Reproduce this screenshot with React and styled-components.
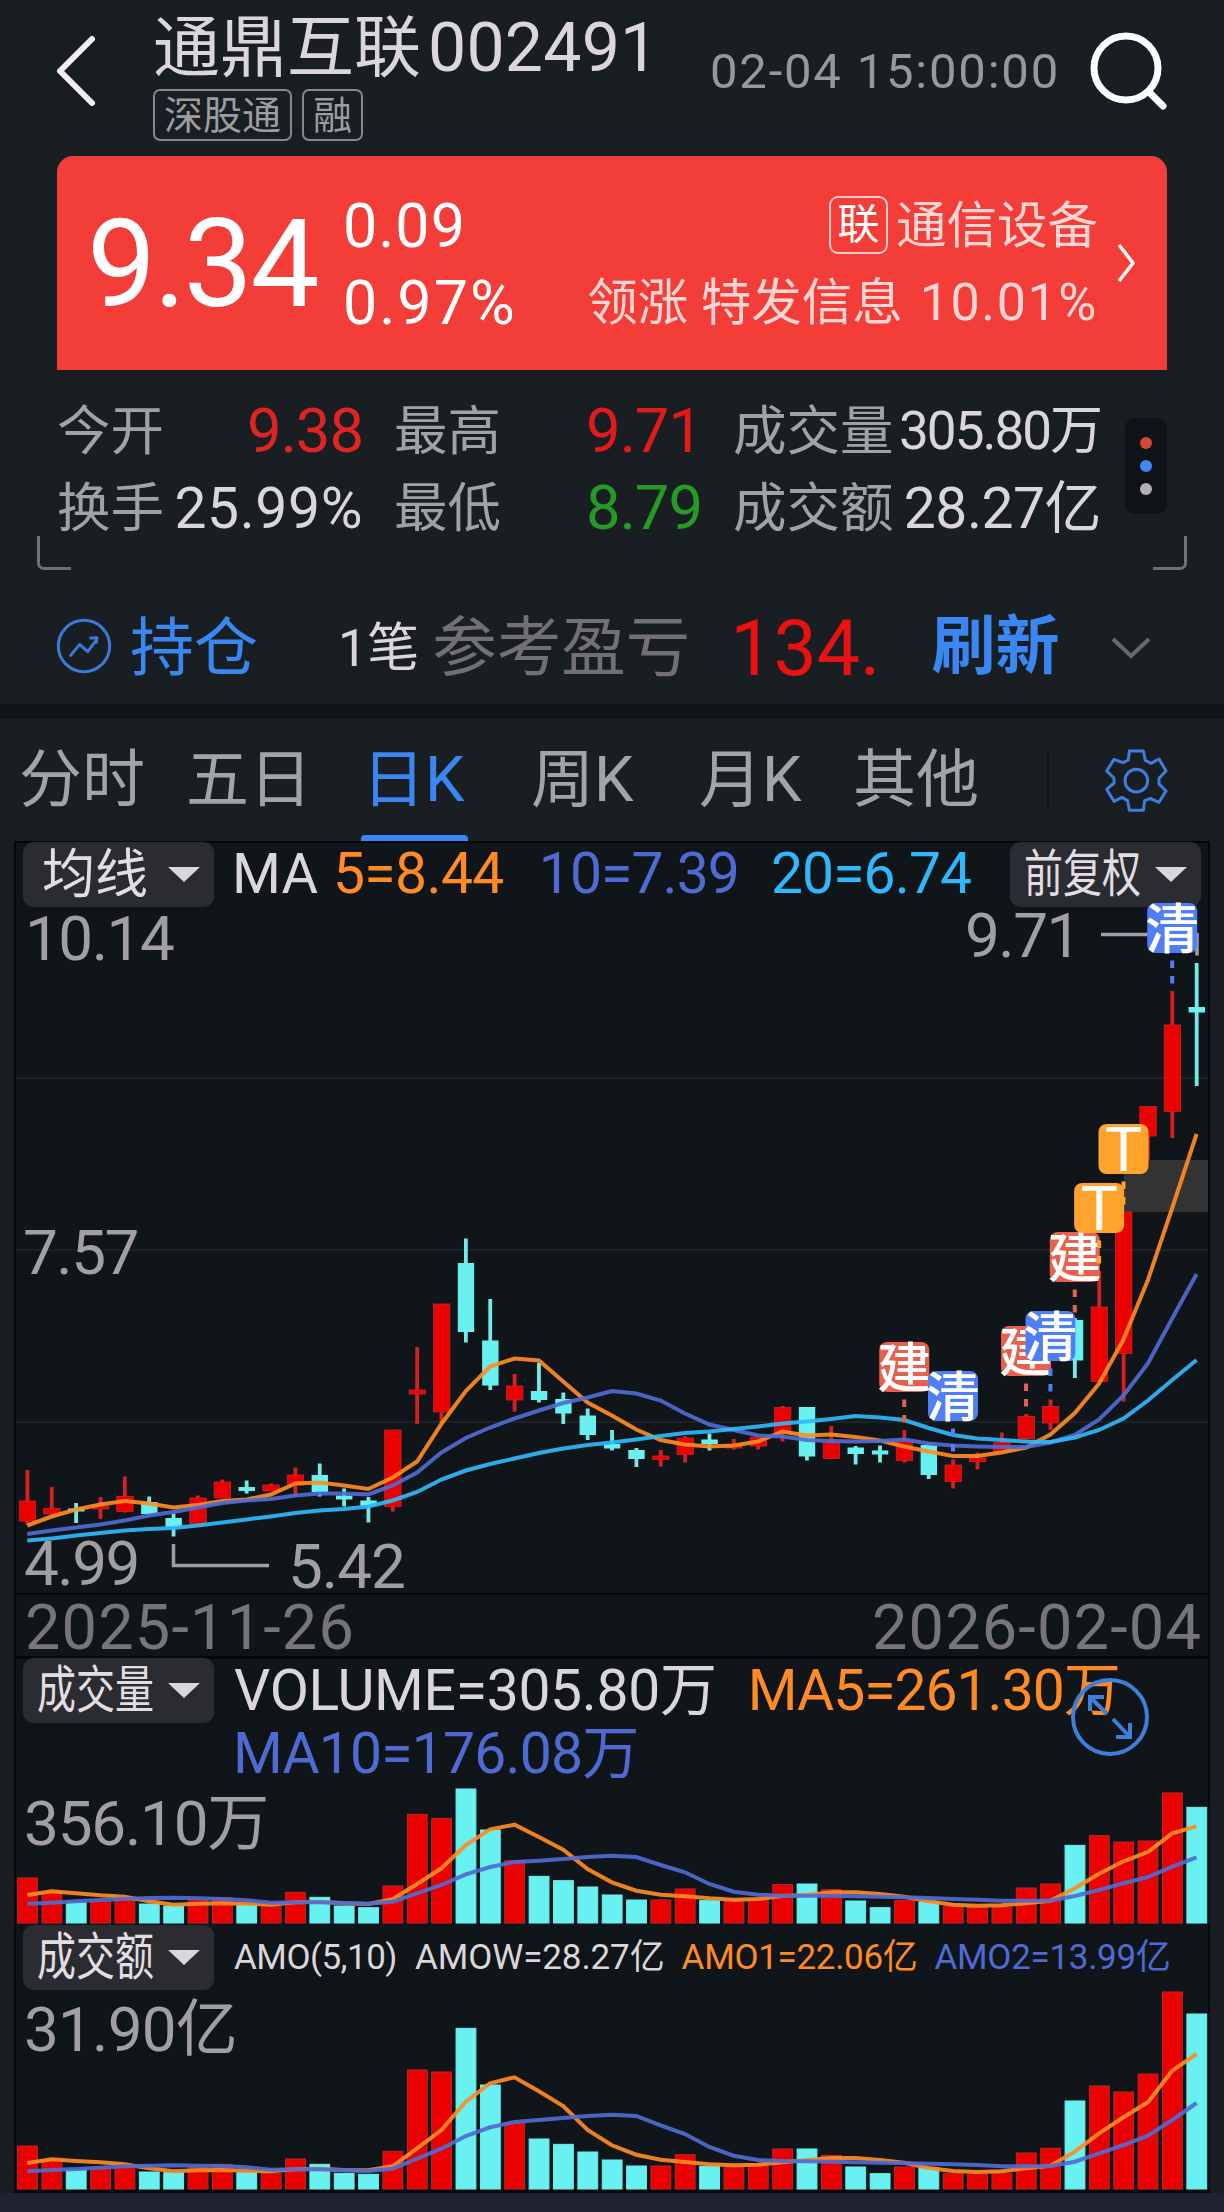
import React from 'react'
import styled, { createGlobalStyle } from 'styled-components'

const RED = '#eb0000'
const CYAN = '#68f1f0'
const ORANGE = '#ff8b22'
const INDIGO = '#4f6bd3'
const SKY = '#2fb9fb'
const BLUE = '#3a86f2'
const FONT = "Roboto, 'Noto Sans CJK SC', sans-serif"

const GlobalStyle = createGlobalStyle`
  body {
    margin: 0;
    background: #191e22;
    font-family: ${FONT};
  }
  * {
    box-sizing: border-box;
  }
`

const Page = styled.div`
  width: 1224px;
  height: 2212px;
  display: flex;
  flex-direction: column;
  overflow: hidden;
  background: #191e22;
`

// text with its own size, spacing and left offset
const Txt = styled.span`
  display: block;
  white-space: pre;
  line-height: 1;
  font-size: ${(p) => p.$size}px;
  letter-spacing: ${(p) => p.$ls || 0}px;
  color: ${(p) => p.$color || '#dad6da'};
  font-weight: ${(p) => p.$weight || 400};
  margin-left: ${(p) => p.$ml || 0}px;
  margin-top: ${(p) => p.$mt || 0}px;
`

const Header = styled.header`
  height: 156px;
  flex: none;
  display: flex;
  align-items: flex-start;
  padding-left: 54px;
`

const BackIcon = styled.svg`
  width: 44px;
  height: 76px;
  margin-top: 33px;
`

const TitleBlock = styled.div`
  width: 557px;
  padding: 12px 0 0 55px;
`

const Title = styled.h1`
  display: flex;
  align-items: center;
  height: 70px;
  margin: 0;
  font-weight: 400;
`

const Tags = styled.div`
  display: flex;
  gap: 10px;
  margin-top: 7px;
`

const Tag = styled.span`
  height: 52px;
  padding: 0 9px;
  border: 2px solid #85888d;
  border-radius: 7px;
  color: #9b9da1;
  font-size: 39px;
  line-height: 50px;
`

const Time = styled.div`
  width: 378px;
  padding-top: 47px;
`

const SearchIcon = styled.svg`
  width: 84px;
  height: 84px;
  margin-top: 30px;
  margin-left: 55px;
`

const HeaderRight = styled.div`
  display: flex;
  width: 520px;
`

const Card = styled.section`
  height: 214px;
  flex: none;
  margin: 0 57px;
  padding: 0 28px 0 30px;
  display: flex;
  background: #f23d39;
  border-radius: 16px 16px 0 0;
`

const Price = styled.div`
  width: 256px;
  padding-top: 47px;
`

const Change = styled.div`
  width: 209px;
  display: flex;
  flex-direction: column;
  gap: 16px;
  padding-top: 40px;
`

const Sector = styled.div`
  width: 546px;
  display: flex;
  flex-direction: column;
`

const SectorRow = styled.div`
  display: flex;
  justify-content: flex-end;
  align-items: center;
  height: 60px;
  margin-top: ${(p) => p.$mt}px;
`

const LinkTag = styled.span`
  width: 59px;
  height: 58px;
  margin-right: 8px;
  border: 2px solid #fbc9c7;
  border-radius: 9px;
  color: #fff;
  font-size: 42px;
  line-height: 53px;
  text-align: center;
`

const CardArrow = styled.svg`
  width: 24px;
  height: 44px;
  margin: 85px 0 0 17px;
`

const Stats = styled.section`
  height: 213px;
  flex: none;
  display: flex;
  padding: 0 37px;
`

const Corner = styled.div`
  width: 34px;
  height: 34px;
  flex: none;
  margin-top: 166px;
  border: 3px solid #6f7175;
  border-top: 0;
  ${(p) => (p.$right ? 'border-left: 0; border-bottom-right-radius: 7px;' : 'border-right: 0; border-bottom-left-radius: 7px;')}
`

const StatGrid = styled.div`
  display: grid;
  grid-template-columns: 306px 308px 368px;
  grid-auto-rows: 77px;
  column-gap: 31px;
  width: 1044px;
  flex: none;
  margin: 23px 0 0 -14px;
`

const Stat = styled.div`
  display: flex;
  justify-content: space-between;
  align-items: center;
`

const Dots = styled.div`
  width: 42px;
  height: 96px;
  flex: none;
  margin: 48px 0 0 24px;
  padding: 19px 0 0;
  display: flex;
  flex-direction: column;
  align-items: center;
  gap: 11px;
  background: #0f1316;
  border-radius: 10px;
`

const Dot = styled.i`
  width: 12px;
  height: 12px;
  border-radius: 50%;
  background: ${(p) => p.$color};
`

const StatsRight = styled.div`
  display: flex;
  flex: 1;
  min-width: 0;
`

const Holding = styled.section`
  height: 121px;
  flex: none;
  padding: 4px 0 0 54px;
  display: flex;
  align-items: center;
`

const TrendIcon = styled.svg`
  width: 60px;
  height: 60px;
`

const DownIcon = styled.svg`
  width: 44px;
  height: 26px;
  margin-left: 50px;
  margin-top: 4px;
`

const Band = styled.div`
  height: 15px;
  flex: none;
  background: #111519;
`

const Tabs = styled.nav`
  height: 122px;
  flex: none;
  display: flex;
  padding-left: 19px;
`

const Tab = styled.div`
  width: ${(p) => p.$w}px;
  display: flex;
  flex-direction: column;
  justify-content: space-between;
  color: ${(p) => (p.$active ? BLUE : '#a3a4a9')};
  font-size: 63px;
  line-height: 122px;
  white-space: nowrap;
`

const Underline = styled.div`
  height: 6px;
  width: 107px;
  flex: none;
  margin: -6px 0 0 -1px;
  background: ${BLUE};
  border-radius: 4px 4px 0 0;
`

const TabDivider = styled.div`
  width: 2px;
  height: 57px;
  margin-top: 32px;
  background: #12161a;
`

const GearIcon = styled.svg`
  width: 92px;
  height: 92px;
  margin: 16px 0 0 41px;
`

const Panel = styled.section`
  height: 1352px;
  flex: none;
  margin: 0 14px;
  border: 2px solid #050709;
  border-width: 2px 2px 3px;
  background: #101519;
  display: flex;
  flex-direction: column;
`

const Legend = styled.div`
  height: 65px;
  flex: none;
  display: flex;
  align-items: center;
  padding-left: 7px;
  margin-top: ${(p) => p.$mt || 0}px;
`

const Select = styled.button`
  width: 191px;
  height: 65px;
  flex: none;
  display: flex;
  align-items: center;
  justify-content: space-between;
  margin: ${(p) => (p.$end ? '-2px 7px 0 auto' : '-2px 0 0')};
  padding: 0 14px 0 ${(p) => p.$pl || 14}px;
  border: 0;
  border-radius: 11px;
  background: #2a2c31;
  color: #e2dde1;
  font: 400 53px/62px ${FONT};
`

const Narrow = styled.span`
  width: 118px;
  white-space: nowrap;
  font-size: 51px;
  line-height: 60px;
  transform: scaleX(0.765);
  transform-origin: left;
`

const Triangle = styled.i`
  flex: none;
  border: 16px solid transparent;
  border-top: 15px solid #dad6da;
  border-bottom: 0;
`

const Wrapped = styled.div`
  display: flex;
  height: 64px;
  padding: 0 0 5px 217px;
  align-items: center;
`

const Dates = styled.div`
  height: 66px;
  flex: none;
  display: flex;
  justify-content: space-between;
  align-items: center;
  padding: 3px 6px 0 9px;
  border: solid #050709;
  border-width: 2px 0 3px;
`

const Chart = styled.svg`
  display: block;
  flex: none;
  width: 1192px;
  height: ${(p) => p.$h}px;
  overflow: visible;
  position: relative;
`

const ExpandIcon = styled.svg`
  width: 80px;
  height: 80px;
  flex: none;
  margin-left: -50px;
  margin-top: 50px;
  position: relative;
`

const TabBar = styled.div`
  flex: 1;
  background: #1f2331;
`

// ---- chart data: everything on a 49 day axis ----

const STEP = 24.36
const x = (i) => 27.3 + STEP * i

// [direction, high, body top, body bottom, low]
const candles = [
  ['r', 1470, 1501, 1521, 1525], ['r', 1487, 1508.5, 1514, 1514.5], ['c', 1503, 1508.5, 1511.5, 1523],
  ['r', 1497, 1506, 1509, 1519], ['r', 1476.5, 1496.5, 1511.5, 1512.5], ['c', 1496.5, 1502, 1514, 1514],
  ['c', 1513.5, 1518, 1527, 1536.5], ['r', 1495.5, 1498, 1523.5, 1524], ['r', 1479.5, 1482, 1498, 1498],
  ['c', 1480.5, 1487, 1491, 1493.5], ['r', 1483.5, 1485, 1491, 1491], ['r', 1467.5, 1475, 1485, 1496.5],
  ['c', 1463.5, 1475, 1492, 1496.5], ['c', 1488.5, 1495.5, 1499.5, 1506.5], ['c', 1497, 1500.5, 1506, 1522.5],
  ['r', 1430, 1430, 1506.5, 1511.5], ['r', 1347, 1390, 1394, 1424], ['r', 1304, 1304, 1412, 1423],
  ['c', 1238.5, 1263, 1332, 1342.5], ['c', 1299, 1340.5, 1385.5, 1390], ['r', 1374, 1386, 1400, 1411.5],
  ['c', 1363, 1391, 1400, 1402.5], ['c', 1392.5, 1399, 1413.5, 1424], ['c', 1408.5, 1415.5, 1435, 1440],
  ['c', 1430, 1444, 1448.5, 1450.5], ['c', 1448, 1450, 1459, 1467], ['r', 1450, 1456, 1459.5, 1466.5],
  ['r', 1436, 1438, 1454.5, 1462.5], ['c', 1433.5, 1439.5, 1444, 1450.5], ['r', 1439, 1445, 1448, 1449.5],
  ['r', 1437, 1437.5, 1446, 1449.5], ['r', 1406, 1407.5, 1433.5, 1441.5], ['c', 1407, 1407, 1456.5, 1460.5],
  ['r', 1426, 1442.5, 1458.5, 1458.5], ['c', 1446, 1447.5, 1454, 1464.5], ['c', 1445.5, 1450.5, 1454.5, 1462.5],
  ['r', 1430, 1441.5, 1460.5, 1462.5], ['c', 1443, 1445, 1475, 1479], ['r', 1459.5, 1465, 1481.5, 1488.5],
  ['r', 1452.5, 1458, 1461.5, 1469.5], ['r', 1432.5, 1442.5, 1451.5, 1452], ['r', 1414, 1416.5, 1438.5, 1439.5],
  ['r', 1399.5, 1406.5, 1423, 1430], ['c', 1318, 1320, 1360.5, 1378], ['r', 1271, 1307, 1381.5, 1381.5],
  ['r', 1212, 1212, 1353.5, 1401.5], ['r', 1106.5, 1106.5, 1136, 1159.5], ['r', 991, 1025, 1111.5, 1138],
  ['c', 963, 1007, 1012.5, 1086],
]

const ma5 = [
  1525.5, 1516.5, 1509.5, 1504.5, 1501, 1503.5, 1507.5, 1505, 1501, 1499.5, 1494.5, 1483.5, 1482.5, 1485.5, 1489,
  1477.5, 1461.5, 1424, 1391, 1366.5, 1358.5, 1360.5, 1381.5, 1402.5, 1415.5, 1429.5, 1440, 1444.5, 1446.5, 1445.5,
  1441.5, 1431.5, 1435.5, 1434.5, 1437, 1440.5, 1446.5, 1451.5, 1456, 1456, 1452.5, 1447.5, 1434.5, 1413, 1383.5,
  1339.5, 1280, 1208, 1134,
]
const ma10 = [
  1534, 1530.5, 1527.5, 1524.5, 1520.5, 1515.5, 1512, 1507.5, 1503, 1500.5, 1499, 1495.5, 1493.5, 1493.5, 1494.5,
  1485.5, 1472.5, 1452.5, 1438, 1427.5, 1418.5, 1410.5, 1403, 1397.5, 1391, 1393.5, 1400.5, 1413.5, 1424.5, 1430,
  1435.5, 1436.5, 1440, 1441, 1441.5, 1441, 1439.5, 1443.5, 1445.5, 1446.5, 1447, 1447, 1442.5, 1435, 1419.5,
  1395.5, 1363.5, 1318.5, 1274,
]
const ma20 = [
  1540.5, 1538.5, 1535.5, 1533, 1530.5, 1529, 1528, 1525.5, 1522.5, 1519.5, 1516.5, 1513, 1510.5, 1509, 1506.5,
  1500.5, 1492, 1479.5, 1470.5, 1464, 1458.5, 1453, 1448.5, 1445, 1442.5, 1439.5, 1436, 1433, 1431.5, 1429,
  1426.5, 1423.5, 1421.5, 1419, 1416, 1417.5, 1420, 1428, 1435, 1438.5, 1440, 1441.5, 1442, 1437.5, 1430,
  1418.5, 1400.5, 1380, 1360,
]

// bar heights, three units per pixel
const volume = {
  base: 549,
  bars: [
    414, 458, 488, 484, 475, 492, 498, 480, 473, 495, 500, 457, 472, 498, 503, 438, 223, 235, 147, 270, 362, 409,
    422, 441, 465, 480, 480, 447, 482, 485, 478, 434, 432, 449, 483, 503, 482, 486, 500, 502, 502, 444, 432, 316,
    287, 306, 303, 159, 202,
  ],
  fast: [
    465, 454, 460, 466, 470, 484, 494, 491, 490, 491, 494, 487, 485, 490, 492, 478, 432, 385, 315, 268, 254, 291,
    329, 387, 427, 452, 464, 469, 475, 479, 477, 468, 465, 457, 457, 462, 470, 484, 494, 497, 496, 490, 482, 445,
    401, 364, 336, 280, 259,
  ],
  slow: [
    491, 488, 484, 480, 477, 474, 473, 475, 477, 481, 488, 487, 487, 489, 491, 485, 460, 435, 403, 381, 366, 362,
    357, 351, 347, 351, 375, 397, 432, 455, 464, 467, 467, 467, 469, 470, 472, 474, 477, 479, 482, 482, 482, 468,
    450, 430, 411, 380, 352,
  ],
}
const amount = {
  base: 1347,
  bars: [
    1218, 1262, 1290, 1285, 1277, 1296, 1298, 1283, 1273, 1298, 1301, 1257, 1273, 1300, 1303, 1234, 990, 996, 865,
    1035, 1148, 1197, 1213, 1236, 1260, 1278, 1278, 1244, 1279, 1282, 1275, 1227, 1227, 1246, 1281, 1301, 1281,
    1284, 1301, 1302, 1300, 1239, 1225, 1083, 1038, 1056, 1002, 756, 822,
  ],
  fast: [
    1269, 1258, 1263, 1267, 1273, 1285, 1294, 1291, 1290, 1292, 1294, 1288, 1286, 1290, 1291, 1279, 1225, 1170,
    1085, 1030, 1012, 1054, 1098, 1170, 1216, 1244, 1259, 1266, 1273, 1276, 1274, 1267, 1260, 1254, 1254, 1260,
    1268, 1284, 1293, 1296, 1294, 1285, 1277, 1235, 1180, 1132, 1087, 992, 942,
  ],
  slow: [
    1294, 1290, 1287, 1283, 1279, 1277, 1276, 1277, 1278, 1282, 1289, 1288, 1288, 1291, 1293, 1286, 1256, 1226,
    1188, 1162, 1146, 1140, 1134, 1128, 1124, 1128, 1156, 1182, 1221, 1247, 1260, 1263, 1264, 1265, 1267, 1268,
    1269, 1271, 1273, 1275, 1279, 1279, 1278, 1265, 1240, 1215, 1187, 1140, 1089,
  ],
}

// trades: day index, top of the badge, label, colour
const trades = [
  [36, 1342, '建', '#e8614e'],
  [38, 1371, '清', '#4f7ef5'],
  [41, 1326, '建', '#e8614e'],
  [42, 1311, '清', '#4f7ef5'],
  [43, 1232, '建', '#e8614e'],
  [44, 1183, 'T', '#ffa32f'],
  [45, 1124, 'T', '#ffa32f'],
  [47, 903, '清', '#4f7ef5'],
]

const Line = ({ data, color, y = (v) => v }) => (
  <polyline
    points={data.map((v, i) => `${x(i).toFixed(1)},${y(v).toFixed(1)}`).join(' ')}
    fill="none"
    stroke={color}
    strokeWidth="4"
    strokeOpacity="0.92"
  />
)

const Candle = ({ i, c: [dir, high, top, bottom, low] }) => (
  <g fill={dir === 'r' ? RED : CYAN}>
    <rect x={x(i) - 1.8} y={high} width="3.8" height={low - high} fill={dir === 'r' ? '#d42020' : '#74ebe6'} />
    <rect x={x(i) - 8} y={top} width="16.4" height={bottom - top} stroke={dir === 'r' ? '#cf2323' : 'none'} strokeWidth="0.8" />
  </g>
)

const Trade = ({ t: [i, y, label, color] }) => (
  <g>
    <path d={`M${x(i)} ${y + 57.5}v7.5m0 8v7.5`} stroke={color} strokeWidth="4" />
    <rect x={x(i) - 25} y={y} width="50" height="50" rx="8" fill={color} />
    <text
      x={x(i)}
      y={y + (label === 'T' ? 46.5 : 45.5)}
      textAnchor="middle"
      fontSize={label === 'T' ? 62 : 54}
      fontWeight={label === 'T' ? 400 : 500}
      fill="#fff"
    >
      {label}
    </text>
  </g>
)

const Label = ({ color = '#a29fa3', ls = -1.5, size = 62, ...rest }) => (
  <text fill={color} fontSize={size} letterSpacing={ls} {...rest} />
)

const BarChart = ({ data, height, label, baseline, ls }) => {
  const top = (v) => height - (data.base - v) / 3
  return (
    <Chart $h={height} viewBox={`16 0 1192 ${height}`}>
      <Label x="24" y={baseline} ls={ls}>{label}</Label>
      {data.bars.map((v, i) => (
        <rect
          key={i}
          x={x(i) - 9.7}
          y={top(v)}
          width="19.8"
          height={height - top(v)}
          fill={candles[i][0] === 'r' ? RED : CYAN}
          stroke={candles[i][0] === 'r' ? '#c32622' : CYAN}
          strokeWidth="1"
        />
      ))}
      <Line data={data.fast} y={top} color={ORANGE} />
      <Line data={data.slow} y={top} color={INDIGO} />
    </Chart>
  )
}

const tabs = [
  ['分时', 167],
  ['五日', 176],
  ['日K', 169],
  ['周K', 168],
  ['月K', 154],
  ['其他', 194],
]

const stats = [
  ['今开', '9.38', '#e02424', 61.5, -1],
  ['最高', '9.71', '#e11b1b', 61.5, -1],
  ['成交量', '305.80万', '#dad6da', 53, -2],
  ['换手', '25.99%', '#dad6da', 57, 0.6],
  ['最低', '8.79', '#259a25', 61.5, -1],
  ['成交额', '28.27亿', '#dad6da', 57, -0.5],
]

const App = () => {
  return (
    <Page>
      <GlobalStyle />
      <Header>
        <BackIcon viewBox="0 0 44 76" fill="none" stroke="#f1edf0" strokeWidth="6" strokeLinecap="round" strokeLinejoin="round">
          <path d="M38 6 6 38l32 32" />
        </BackIcon>
        <TitleBlock>
          <Title>
            <Txt $size={67} $mt={2}>通鼎互联</Txt>
            <Txt $size={68} $ls={0.2} $ml={7} $mt={2}>002491</Txt>
          </Title>
          <Tags>
            <Tag>深股通</Tag>
            <Tag>融</Tag>
          </Tags>
        </TitleBlock>
        <HeaderRight>
          <Time>
            <Txt $size={49} $ls={1.8} $ml={55} $color="#96989c">02-04 15:00:00</Txt>
          </Time>
          <SearchIcon viewBox="0 0 84 84" fill="none" stroke="#fff" strokeWidth="7" strokeLinecap="round">
            <circle cx="38" cy="38" r="32" />
            <path d="m61 62 14 14" />
          </SearchIcon>
        </HeaderRight>
      </Header>

      <Card>
        <Price>
          <Txt $size={123} $ls={-2.4} $color="#fff">9.34</Txt>
        </Price>
        <Change>
          <Txt $size={61} $ls={1} $color="#fff">0.09</Txt>
          <Txt $size={61} $ls={2} $color="#fff">0.97%</Txt>
        </Change>
        <Sector>
          <SectorRow $mt={39}>
            <LinkTag>联</LinkTag>
            <Txt $size={50.5} $mt={2} $color="#fdd5d3">通信设备</Txt>
          </SectorRow>
          <SectorRow $mt={17}>
            <Txt $size={50.5} $mt={3} $color="#fdd5d3">领涨 特发信息</Txt>
            <Txt $size={52} $ls={1.6} $ml={17} $mt={2} $color="#fdd5d3">10.01%</Txt>
          </SectorRow>
        </Sector>
        <CardArrow viewBox="0 0 24 44" fill="none" stroke="#fff" strokeWidth="3.5">
          <path d="m4 4 14 18L4 40" />
        </CardArrow>
      </Card>

      <Stats>
        <Corner />
        <StatsRight>
          <StatGrid>
            {stats.map(([name, value, color, size, ls]) => (
              <Stat key={name}>
                <Txt $size={53.5} $color="#a0a2a6">{name}</Txt>
                <Txt $size={size} $ls={ls} $color={color}>{value}</Txt>
              </Stat>
            ))}
          </StatGrid>
          <Dots>
            <Dot $color="#d34936" />
            <Dot $color="#3f87f5" />
            <Dot $color="#b1b1b5" />
          </Dots>
        </StatsRight>
        <Corner $right />
      </Stats>

      <Holding>
        <TrendIcon viewBox="12 18 180 180" fill="none" stroke="#3d78d8" strokeWidth="9">
          <circle cx="102" cy="108" r="77" />
          <path d="m62 136 27-33 24 22 27-36M122 84l19-1-2 14" strokeLinejoin="round" strokeLinecap="round" />
        </TrendIcon>
        <Txt $size={64} $ml={16} $mt={6} $color={BLUE}>持仓</Txt>
        <Txt $size={52} $ml={80} $mt={6}>1笔</Txt>
        <Txt $size={64.5} $ml={13} $mt={6} $color="#727075">参考盈亏</Txt>
        <Txt $size={77} $ls={0} $ml={40} $mt={7} $color="#ea1111">134.</Txt>
        <Txt $size={64} $ml={51} $mt={2} $weight={700} $color={BLUE}>刷新</Txt>
        <DownIcon viewBox="0 0 44 26" fill="none" stroke="#67696d" strokeWidth="4">
          <path d="m4 4 18 17L40 4" />
        </DownIcon>
      </Holding>

      <Band />

      <Tabs>
        {tabs.map(([name, w]) => (
          <Tab key={name} $w={w} $active={name === '日K'}>
            {name}
            {name === '日K' && <Underline />}
          </Tab>
        ))}
        <TabDivider />
        <GearIcon viewBox="0 0 276 276" fill="none" stroke="#3d7edf" strokeWidth="9" strokeLinejoin="round">
          <path d="M118 48h42l6 28 17 9 24-13 21 36-21 22v17l21 21-21 34-26-12-17 7-4 29h-42l-5-29-17-10-24 12-22-36 22-19v-15l-22-21 22-35 27 10 16-8z" />
          <circle cx="139" cy="137" r="34" />
        </GearIcon>
      </Tabs>

      <Panel>
        <Legend>
          <Select $pl={19}>
            均线
            <Triangle />
          </Select>
          <Txt $size={56} $ml={18} $mt={-4}>MA</Txt>
          <Txt $size={57} $ls={-0.6} $ml={15} $mt={-5} $color={ORANGE}>5=8.44</Txt>
          <Txt $size={57} $ls={-0.9} $ml={35} $mt={-5} $color={INDIGO}>10=7.39</Txt>
          <Txt $size={57} $ls={-0.9} $ml={32} $mt={-5} $color={SKY}>20=6.74</Txt>
          <Select $end>
            <Narrow>前复权</Narrow>
            <Triangle />
          </Select>
        </Legend>

        <Chart $h={685} viewBox="16 908 1192 685">
          <path d="M16 1078h1192M16 1250h1192M16 1422h1192" stroke="#1e2224" strokeWidth="2" />
          <rect x="1124" y="1160" width="84" height="52" fill="#333333" />
          <Label x="25" y="960">10.14</Label>
          <Label x="23" y="1274">7.57</Label>
          <Label x="24" y="1585">4.99</Label>
          <Label x="288" y="1588" ls={-1}>5.42</Label>
          <Label x="965" y="957">9.71</Label>
          <path d="M1101 934.5h96v21M173.5 1544v21.5H269" fill="none" stroke="#a29fa3" strokeWidth="3.5" />
          {candles.map((c, i) => (
            <Candle key={i} i={i} c={c} />
          ))}
          <Line data={ma5} color={ORANGE} />
          <Line data={ma10} color={INDIGO} />
          <Line data={ma20} color={SKY} />
          {trades.map((t) => (
            <Trade key={t[0]} t={t} />
          ))}
        </Chart>

        <Dates>
          <Txt $size={63} $ls={1.2} $color="#77757a">2025-11-26</Txt>
          <Txt $size={63} $ls={1.2} $color="#77757a">2026-02-04</Txt>
        </Dates>

        <Legend>
          <Select>
            <Narrow>成交量</Narrow>
            <Triangle />
          </Select>
          <Txt $size={57} $ls={-0.3} $ml={20} $mt={-3}>VOLUME=305.80万</Txt>
          <Txt $size={57} $ls={-1} $ml={31} $mt={-3} $color={ORANGE}>MA5=261.30万</Txt>
          <ExpandIcon viewBox="0 0 80 80" fill="none" stroke="#3d80dc" strokeWidth="4">
            <circle cx="40" cy="40" r="37" />
            <path d="M20 34V20h14M20 20l17 17M43 42l17 18M46 60h14V46" />
          </ExpandIcon>
        </Legend>
        <Wrapped>
          <Txt $size={57} $ls={-0.8} $color={INDIGO}>MA10=176.08万</Txt>
        </Wrapped>
        <BarChart data={volume} height={135} label="356.10万" baseline={57} ls={-1.2} />

        <Legend $mt={3}>
          <Select>
            <Narrow>成交额</Narrow>
            <Triangle />
          </Select>
          <Txt $size={35} $ls={-0.5} $ml={20} $mt={-3}>AMO(5,10)</Txt>
          <Txt $size={35} $ls={-0.1} $ml={18} $mt={-3}>AMOW=28.27亿</Txt>
          <Txt $size={35} $ls={-0.3} $ml={17} $mt={-3} $color={ORANGE}>AMO1=22.06亿</Txt>
          <Txt $size={35} $ls={-0.3} $ml={17} $mt={-3} $color={INDIGO}>AMO2=13.99亿</Txt>
        </Legend>
        <BarChart data={amount} height={198} label="31.90亿" baseline={60} ls={-0.8} />
      </Panel>
      <TabBar />
    </Page>
  )
}

export default App
